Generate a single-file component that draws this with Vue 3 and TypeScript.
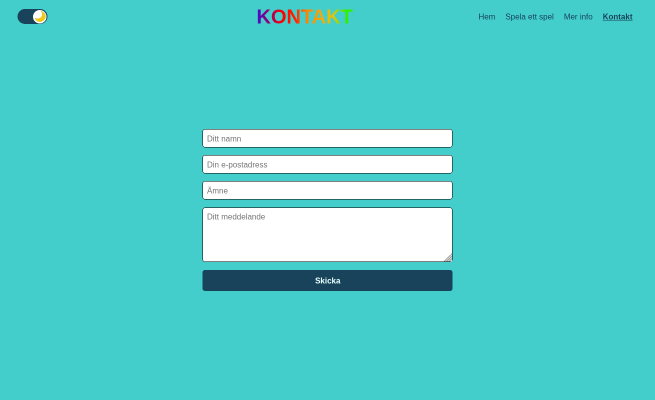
<script setup lang="ts">
import { ref } from 'vue'

interface NavLink {
  label: string
  active?: boolean
}

const links: NavLink[] = [
  { label: 'Hem' },
  { label: 'Spela ett spel' },
  { label: 'Mer info' },
  { label: 'Kontakt', active: true },
]

const dark = ref(true)
const name = ref('')
const email = ref('')
const subject = ref('')
const message = ref('')
</script>

<template>
  <div class="viewport">
    <div class="page">
      <header class="header">
        <button class="toggle" :class="{ off: !dark }" type="button" @click="dark = !dark">
          <span class="knob">
            <svg class="moon" viewBox="0 0 24 24">
              <path d="M14.500 1.500C20.500 9.500 13.500 19.500 2 15.500C4 21 10 24 16 21.500C22 19 24.500 12 21.500 7C20 4.200 17.500 2.200 14.500 1.500Z" fill="#eecb12" stroke="#d9b41c" stroke-width=".8" />
            </svg>
          </span>
        </button>
        <h1 class="title">KONTAKT</h1>
        <nav class="nav">
          <a v-for="link in links" :key="link.label" class="link" :class="{ active: link.active }">{{ link.label }}</a>
        </nav>
      </header>
      <form class="form" @submit.prevent>
        <input v-model="name" class="field" type="text" placeholder="Ditt namn" />
        <input v-model="email" class="field" type="email" placeholder="Din e-postadress" />
        <input v-model="subject" class="field" type="text" placeholder="Ämne" />
        <div class="area">
          <textarea v-model="message" class="field message" placeholder="Ditt meddelande"></textarea>
          <svg class="grip" viewBox="0 0 16 16">
            <path d="M16 0V16H0Z" fill="#dcdcdc" />
            <path d="M0 16L16 0M5 16L16 5M10 16L16 10" stroke="#858585" stroke-width="1.300" />
          </svg>
        </div>
        <button class="send" type="submit">Skicka</button>
      </form>
    </div>
  </div>
</template>

<style>
body {
  margin: 0;
  background: #43cecc;
}
</style>

<style scoped>
.viewport {
  width: 655px;
  height: 400px;
  overflow: hidden;
}
.page {
  width: 1310px;
  height: 800px;
  display: flex;
  flex-direction: column;
  overflow: hidden;
  transform: scale(0.5);
  transform-origin: 0 0;
  will-change: transform;
  background: #43cecc;
  font-family: "Liberation Sans", Arial, sans-serif;
  font-size: 16px;
  color: #18435a;
}
.header {
  box-sizing: border-box;
  height: 66px;
  padding: 0 45px 0 35px;
  display: flex;
  align-items: center;
}
.toggle {
  width: 60px;
  height: 30px;
  padding: 1px 2px;
  display: flex;
  align-items: center;
  justify-content: flex-end;
  border: 0;
  border-radius: 15px;
  background: #18435a;
}
.toggle.off {
  justify-content: flex-start;
}
.knob {
  width: 27px;
  height: 27px;
  display: flex;
  align-items: center;
  justify-content: center;
  border-radius: 50%;
  background: #fff;
}
.moon {
  width: 24px;
  height: 24px;
}
.title {
  margin: 0 0 0 418px;
  font-size: 40px;
  line-height: 46px;
  font-weight: 700;
  color: transparent;
  background: linear-gradient(90deg, #3c10d0 0%, #80008a 9%, #ff0000 27%, #ff2000 40%, #ff8400 52%, #f0a810 67%, #d8c810 80%, #30f000 93%);
  background-clip: text;
  -webkit-background-clip: text;
}
.nav {
  margin-left: auto;
  padding-top: 1px;
  display: flex;
  gap: 20px;
}
.link {
  line-height: 21px;
  white-space: nowrap;
}
.active {
  font-weight: 700;
  text-decoration: underline;
}
.form {
  width: 500px;
  margin: 192px auto 0;
  display: flex;
  flex-direction: column;
  gap: 15px;
}
.field {
  display: block;
  box-sizing: border-box;
  width: 100%;
  height: 37px;
  margin: 0;
  padding: 9px 8px 7px;
  border: 1px solid #000;
  border-radius: 5px;
  background: #fff;
  font: inherit;
  line-height: 18px;
  color: #18435a;
  outline: none;
}
.field::placeholder {
  color: #757575;
  opacity: 1;
}
.area {
  position: relative;
  margin-top: 1px;
}
.message {
  height: 109px;
  resize: none;
  overflow: hidden;
}
.grip {
  position: absolute;
  right: 1px;
  bottom: 1px;
  width: 16px;
  height: 16px;
}
.send {
  height: 42px;
  margin: 1px 0 0;
  padding: 1px 0 0 1px;
  border: 0;
  border-radius: 5px;
  background: #18435a;
  color: #e6ffff;
  font: inherit;
  font-weight: 700;
}
</style>
